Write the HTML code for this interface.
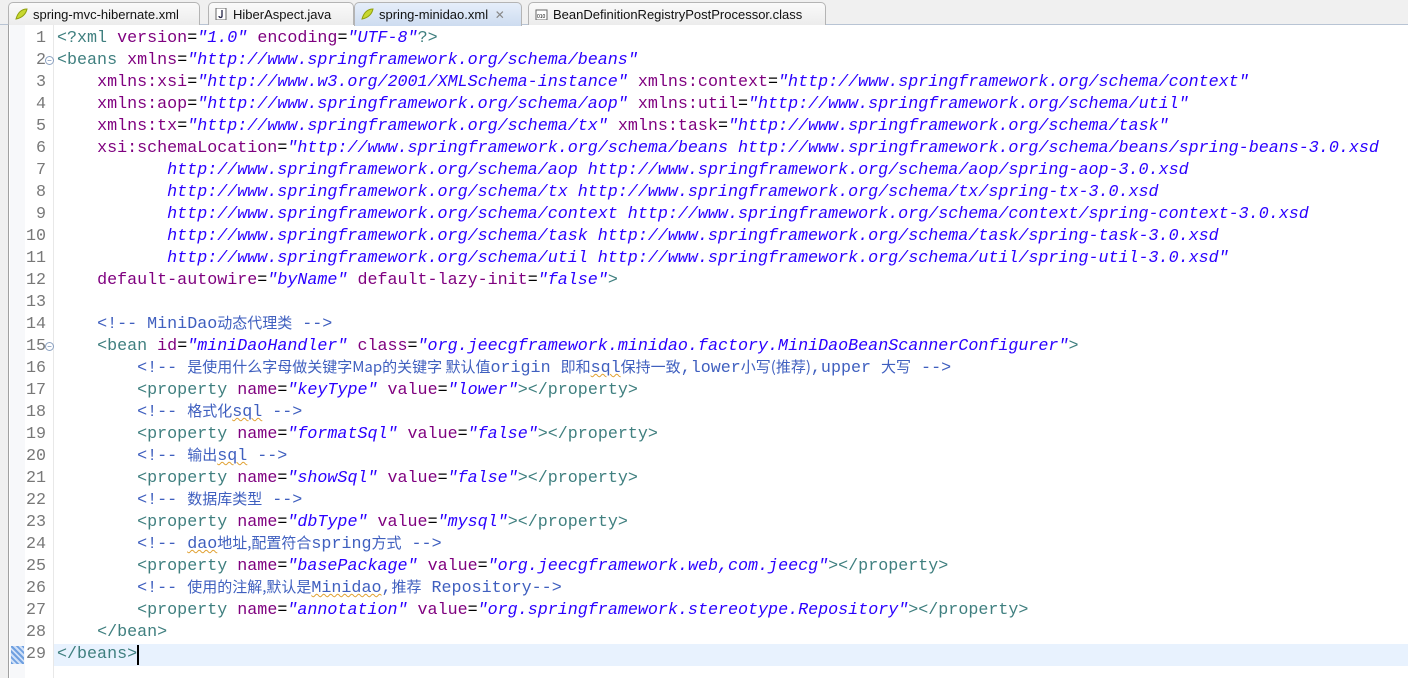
<!DOCTYPE html>
<html><head><meta charset="utf-8">
<style>
*{margin:0;padding:0;box-sizing:border-box}
body{width:1408px;height:678px;overflow:hidden;background:#fff;position:relative;font-family:"Liberation Sans","Noto Sans CJK SC",sans-serif}
.tabbar{position:absolute;left:0;top:0;width:1408px;height:25px;background:#f0f0f0;border-bottom:1px solid #b8c4d4}
.tab{position:absolute;top:2px;height:23px;border:1px solid #b4b4b4;border-bottom:none;border-radius:5px 5px 0 0;background:linear-gradient(#fafafa,#ececec);font-size:13px;color:#111;padding:4px 0 0 24px;white-space:nowrap}
.tab.act{background:linear-gradient(#e6eefa,#cddcf0);height:24px}
.ic{position:absolute;left:6px;top:5px;width:13px;height:12px}
.left{position:absolute;left:0;top:25px;width:9px;height:653px;background:#f0f0f0;border-right:1px solid #a0a0a0}
.left2{position:absolute;left:10px;top:25px;width:15px;height:653px;background:#f7f8fa}
.nums{position:absolute;left:10px;top:28px;width:36px;text-align:right;font-family:"Liberation Mono",monospace;font-size:16.7px;line-height:22px;color:#787878}
.ruler{position:absolute;left:53px;top:25px;width:1px;height:653px;background:#e8e8e8}
.cur{position:absolute;left:54px;top:644px;width:1354px;height:22px;background:#e8f2fe}
.code{position:absolute;left:57px;top:28px;font-family:"Liberation Mono","Noto Sans CJK SC",monospace;font-size:16.7px;line-height:22px;white-space:pre;color:#000}
.t{color:#3f7f7f}.a{color:#7f007f}.v{color:#2a00ff;font-style:italic}.c{color:#3f5fbf}
.z{font-family:"Noto Sans CJK SC",sans-serif;font-size:15px;line-height:16px}
.w{text-decoration:underline wavy #e0a030;text-decoration-thickness:1px}
.fold{position:absolute;left:45px;width:9px;height:9px;border:1px solid #8aa0c0;border-radius:50%;font-size:8px;line-height:7px;text-align:center;color:#5070a0}
.caret{position:absolute;left:137px;top:645px;width:2px;height:20px;background:#000}
.mark{position:absolute;left:11px;top:646px;width:13px;height:18px;background:repeating-linear-gradient(45deg,#6fa0e0 0 2px,#cfe0f8 2px 4px)}
</style></head><body>
<div class="tabbar">
 <div class="tab" style="left:8px;width:192px"><svg class="ic" viewBox="0 0 13 12"><path d="M1 11 C3 4 7 1 12 1 C11 6 7 10 1 11Z" fill="#c8d830" stroke="#90a010"/></svg>spring-mvc-hibernate.xml</div>
 <div class="tab" style="left:208px;width:146px"><svg class="ic" viewBox="0 0 13 12"><rect x="1" y="0" width="10" height="12" fill="#fff" stroke="#666"/><path d="M7 2v6c0 2-3 2-3 0" fill="none" stroke="#224" stroke-width="1.3"/></svg>HiberAspect.java</div>
 <div class="tab act" style="left:354px;width:168px"><svg class="ic" viewBox="0 0 13 12"><path d="M1 11 C3 4 7 1 12 1 C11 6 7 10 1 11Z" fill="#c8d830" stroke="#90a010"/></svg>spring-minidao.xml <span style="color:#888;font-size:12px;margin-left:3px">✕</span></div>
 <div class="tab" style="left:528px;width:298px"><svg class="ic" viewBox="0 0 13 12"><rect x="1" y="2" width="11" height="10" fill="#fff" stroke="#666"/><text x="2" y="10" font-size="5" font-family="Liberation Sans">010</text></svg>BeanDefinitionRegistryPostProcessor.class</div>
</div>
<div class="left"></div><div class="left2"></div>
<div class="ruler"></div>
<div class="cur"></div>
<div class="mark"></div>
<div class="nums">1<br>2<br>3<br>4<br>5<br>6<br>7<br>8<br>9<br>10<br>11<br>12<br>13<br>14<br>15<br>16<br>17<br>18<br>19<br>20<br>21<br>22<br>23<br>24<br>25<br>26<br>27<br>28<br>29</div>
<div class="fold" style="top:56px">−</div>
<div class="fold" style="top:342px">−</div>
<div class="code"><span class="t">&lt;?xml </span><span class="a">version</span>=<span class="v">"1.0"</span> <span class="a">encoding</span>=<span class="v">"UTF-8"</span><span class="t">?&gt;</span>
<span class="t">&lt;beans </span><span class="a">xmlns</span>=<span class="v">"http://www.springframework.org/schema/beans"</span>
    <span class="a">xmlns:xsi</span>=<span class="v">"http://www.w3.org/2001/XMLSchema-instance"</span> <span class="a">xmlns:context</span>=<span class="v">"http://www.springframework.org/schema/context"</span>
    <span class="a">xmlns:aop</span>=<span class="v">"http://www.springframework.org/schema/aop"</span> <span class="a">xmlns:util</span>=<span class="v">"http://www.springframework.org/schema/util"</span>
    <span class="a">xmlns:tx</span>=<span class="v">"http://www.springframework.org/schema/tx"</span> <span class="a">xmlns:task</span>=<span class="v">"http://www.springframework.org/schema/task"</span>
    <span class="a">xsi:schemaLocation</span>=<span class="v">"http://www.springframework.org/schema/beans http://www.springframework.org/schema/beans/spring-beans-3.0.xsd</span>
<span class="v">           http://www.springframework.org/schema/aop http://www.springframework.org/schema/aop/spring-aop-3.0.xsd</span>
<span class="v">           http://www.springframework.org/schema/tx http://www.springframework.org/schema/tx/spring-tx-3.0.xsd</span>
<span class="v">           http://www.springframework.org/schema/context http://www.springframework.org/schema/context/spring-context-3.0.xsd</span>
<span class="v">           http://www.springframework.org/schema/task http://www.springframework.org/schema/task/spring-task-3.0.xsd</span>
<span class="v">           http://www.springframework.org/schema/util http://www.springframework.org/schema/util/spring-util-3.0.xsd"</span>
    <span class="a">default-autowire</span>=<span class="v">"byName"</span> <span class="a">default-lazy-init</span>=<span class="v">"false"</span><span class="t">&gt;</span>

    <span class="c">&lt;!-- MiniDao<span class="z">动态代理类</span> --&gt;</span>
    <span class="t">&lt;bean </span><span class="a">id</span>=<span class="v">"miniDaoHandler"</span> <span class="a">class</span>=<span class="v">"org.jeecgframework.minidao.factory.MiniDaoBeanScannerConfigurer"</span><span class="t">&gt;</span>
        <span class="c">&lt;!-- <span class="z">是使用什么字母做关键字Map的关键字 默认值</span>origin <span class="z">即和</span><span class="w">sql</span><span class="z">保持一致</span>,lower<span class="z">小写(推荐)</span>,upper <span class="z">大写</span> --&gt;</span>
        <span class="t">&lt;property </span><span class="a">name</span>=<span class="v">"keyType"</span> <span class="a">value</span>=<span class="v">"lower"</span><span class="t">&gt;&lt;/property&gt;</span>
        <span class="c">&lt;!-- <span class="z">格式化</span><span class="w">sql</span> --&gt;</span>
        <span class="t">&lt;property </span><span class="a">name</span>=<span class="v">"formatSql"</span> <span class="a">value</span>=<span class="v">"false"</span><span class="t">&gt;&lt;/property&gt;</span>
        <span class="c">&lt;!-- <span class="z">输出</span><span class="w">sql</span> --&gt;</span>
        <span class="t">&lt;property </span><span class="a">name</span>=<span class="v">"showSql"</span> <span class="a">value</span>=<span class="v">"false"</span><span class="t">&gt;&lt;/property&gt;</span>
        <span class="c">&lt;!-- <span class="z">数据库类型</span> --&gt;</span>
        <span class="t">&lt;property </span><span class="a">name</span>=<span class="v">"dbType"</span> <span class="a">value</span>=<span class="v">"mysql"</span><span class="t">&gt;&lt;/property&gt;</span>
        <span class="c">&lt;!-- <span class="w">dao</span><span class="z">地址,配置符合</span>spring<span class="z">方式</span> --&gt;</span>
        <span class="t">&lt;property </span><span class="a">name</span>=<span class="v">"basePackage"</span> <span class="a">value</span>=<span class="v">"org.jeecgframework.web,com.jeecg"</span><span class="t">&gt;&lt;/property&gt;</span>
        <span class="c">&lt;!-- <span class="z">使用的注解,默认是</span><span class="w">Minidao</span>,<span class="z">推荐</span> Repository--&gt;</span>
        <span class="t">&lt;property </span><span class="a">name</span>=<span class="v">"annotation"</span> <span class="a">value</span>=<span class="v">"org.springframework.stereotype.Repository"</span><span class="t">&gt;&lt;/property&gt;</span>
    <span class="t">&lt;/bean&gt;</span>
<span class="t">&lt;/beans&gt;</span></div>
<div class="caret"></div>
</body></html>
